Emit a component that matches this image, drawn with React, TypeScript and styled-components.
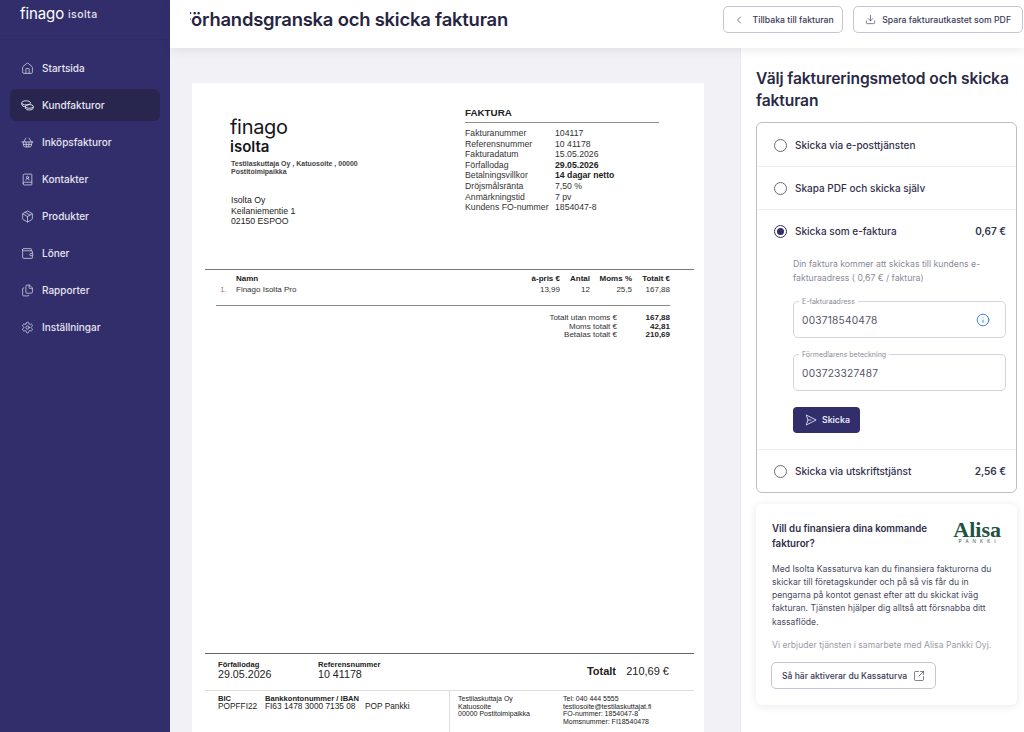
import React from 'react';
import styled, { createGlobalStyle } from 'styled-components';
import {
  Home,
  ShoppingBasket,
  BookUser,
  Package,
  Wallet,
  Files,
  Settings,
  ChevronLeft,
  Download,
  Info,
  SquareArrowOutUpRight,
} from 'lucide-react';

const GlobalStyle = createGlobalStyle`
  html, body {
    margin: 0;
    padding: 0;
    height: 732px;
    overflow: hidden;
    background: #fff;
    font-family: Inter, "Noto Sans", sans-serif;
    color: #2b2a45;
  }
  * { box-sizing: border-box; }
`;

const Shell = styled.div`
  display: flex;
  width: 1024px;
  height: 732px;
  overflow: hidden;
`;

const Sidebar = styled.aside`
  flex: 0 0 170px;
  background: #322e6b;
  color: #e4e3f0;
`;

const Brand = styled.div`
  height: 40px;
  padding: 0 0 12px 20px;
  display: flex;
  align-items: center;
  gap: 4px;
  border-bottom: 1px solid #2f2b64;
`;

const BrandMain = styled.span`
  font-size: 15px;
  font-weight: 400;
  letter-spacing: -0.1px;
  color: #fff;
`;

const BrandSub = styled.span`
  font-size: 10.5px;
  font-weight: 500;
  letter-spacing: 0.4px;
  padding-top: 2px;
  color: #e4e3f0;
`;

const Nav = styled.nav`
  display: flex;
  flex-direction: column;
  gap: 5px;
  padding: 12px 10px 0;
`;

const NavItem = styled.a<{ $active?: boolean }>`
  display: flex;
  align-items: center;
  gap: 8px;
  height: 32px;
  padding-left: 11px;
  border-radius: 6px;
  font-size: 10px;
  font-weight: 500;
  background: ${(p) => (p.$active ? '#28264f' : 'transparent')};
  color: #e6e5f2;
`;

const Main = styled.div`
  flex: 1;
  min-width: 0;
  display: flex;
  flex-direction: column;
`;

const Header = styled.header`
  flex: 0 0 48px;
  display: flex;
  align-items: flex-start;
  justify-content: space-between;
  padding: 6px 1px 0 20px;
  background: #fff;
  box-shadow: 0 2px 10px rgba(40, 40, 90, 0.1);
  z-index: 1;
`;

const TitleClip = styled.div`
  overflow: hidden;
  width: 340px;
  padding-top: 2px;
`;

const Title = styled.h1`
  margin: 0 0 0 -9px;
  font-size: 18.4px;
  line-height: 22px;
  font-weight: 600;
  letter-spacing: -0.2px;
  white-space: nowrap;
  color: #26253f;
`;

const HeaderActions = styled.div`
  display: flex;
  gap: 10px;
`;

const OutlineButton = styled.button`
  display: inline-flex;
  align-items: center;
  gap: 6px;
  height: 27px;
  padding: 0 11px;
  background: #fff;
  border: 1px solid #c6c5d8;
  border-radius: 5px;
  font-family: inherit;
  font-size: 8.7px;
  font-weight: 500;
  color: #3a3957;
  white-space: nowrap;
`;

const BackButton = styled(OutlineButton)`
  gap: 8px;
  padding: 0 8.5px;
`;

const Content = styled.div`
  flex: 1;
  min-height: 0;
  display: flex;
`;

const Preview = styled.section`
  flex: 0 0 570px;
  padding: 35px 0 0 22px;
  background: #f2f2f6;
  overflow: hidden;
`;

const Paper = styled.div`
  width: 512px;
  height: 658px;
  display: flex;
  flex-direction: column;
  background: #fff;
  font-family: "Liberation Sans", Arial, sans-serif;
  color: #222;
`;

const PaperTop = styled.div`
  flex: 0 0 186px;
  display: grid;
  grid-template-columns: 235px 194px;
  padding-left: 38px;
`;

const Sender = styled.div`
  padding-top: 32px;
`;

const InvoiceLogo = styled.div`
  font-family: Inter, sans-serif;
  color: #15151a;
  font-size: 20px;
  line-height: 24px;
  font-weight: 400;
  letter-spacing: -0.3px;
`;

const InvoiceLogoSub = styled.div`
  font-family: Inter, sans-serif;
  color: #15151a;
  font-size: 15px;
  line-height: 16px;
  font-weight: 600;
`;

const SenderLine = styled.div`
  width: 150px;
  margin: 5px 0 0 1px;
  font-size: 7px;
  line-height: 8px;
  font-weight: 700;
  color: #444;
`;

const Address = styled.div`
  margin: 19px 0 0 1px;
  font-size: 8.7px;
  line-height: 10.6px;
  color: #222;
`;

const Facts = styled.div`
  padding-top: 24px;
`;

const FactsTitle = styled.div`
  font-size: 9.8px;
  line-height: 11px;
  font-weight: 700;
  padding-bottom: 4px;
  border-bottom: 1px solid #8c8c8c;
  margin-bottom: 5px;
`;

const FactsGrid = styled.div`
  display: grid;
  grid-template-columns: 90px 1fr;
  font-size: 8.7px;
  line-height: 10.6px;
  color: #333;
`;

const Strong = styled.span`
  font-weight: 700;
  color: #222;
`;

const TableSection = styled.div`
  margin: 0 10px 0 13px;
  border-top: 1px solid #777;
  padding-top: 4px;
`;

const Row = styled.div`
  display: grid;
  grid-template-columns: 31px 1fr 50px 30px 42px 38px;
  padding-right: 24px;
  font-size: 8px;
  line-height: 10.5px;
  color: #333;
`;

const HeadRow = styled(Row)`
  font-weight: 700;
  color: #222;
`;

const Num = styled.span`
  text-align: right;
  padding-right: 10px;
  font-size: 6.5px;
  color: #8a6060;
`;

const Right = styled.span`
  text-align: right;
  white-space: nowrap;
`;

const Rule = styled.div`
  margin: 10px 24px 8px 11px;
  border-top: 1px solid #888;
`;

const Totals = styled.div`
  display: grid;
  grid-template-columns: 1fr 53px;
  padding-right: 24px;
  font-size: 8px;
  line-height: 8.7px;
  text-align: right;
  color: #333;
`;

const Spacer = styled.div`
  flex: 1;
`;

const PaperFooter = styled.div`
  margin: 0 10px 0 13px;
  border-top: 1px solid #666;
`;

const DueRow = styled.div`
  height: 37px;
  display: grid;
  grid-template-columns: 100px 1fr auto 53px;
  align-items: center;
  padding: 0 25px 3px 13px;
  border-bottom: 1px solid #ddd;
`;

const SmallLabel = styled.div`
  font-size: 7.6px;
  line-height: 7px;
  font-weight: 700;
`;

const DueValue = styled.div`
  font-size: 10.7px;
  line-height: 12px;
`;

const TotalLabel = styled.div`
  font-size: 11px;
  font-weight: 700;
`;

const TotalValue = styled.div`
  font-size: 11px;
  text-align: right;
`;

const BankRow = styled.div`
  display: grid;
  grid-template-columns: 244px 1fr;
`;

const BankLeft = styled.div`
  display: grid;
  grid-template-columns: 47px 100px 1fr;
  padding: 4px 0 0 13px;
  height: 50px;
`;

const BankValue = styled.div`
  font-size: 8.3px;
  line-height: 8px;
  white-space: nowrap;
`;

const BankPlain = styled(BankValue)`
  padding-top: 7px;
`;

const BankRight = styled.div`
  display: grid;
  grid-template-columns: 105px 1fr;
  padding: 4px 0 0 8px;
  border-left: 1px solid #ddd;
  font-size: 7px;
  line-height: 7.6px;
  font-weight: 400;
  color: #222;
`;

const Panel = styled.aside`
  flex: 1;
  min-width: 0;
  padding: 20px 7px 0 15px;
  background: #fff;
  border-left: 1px solid #ececf1;
`;

const PanelTitle = styled.h2`
  margin: 0 0 10px;
  font-size: 15.6px;
  line-height: 22px;
  font-weight: 600;
  letter-spacing: -0.1px;
  color: #2a2944;
`;

const MethodCard = styled.div`
  border: 1px solid #bdbdcc;
  border-radius: 6px;
`;

const Method = styled.div`
  padding: 0 10px 0 17px;
  border-top: 1px solid #ececf1;
  &:first-child { border-top-color: transparent; }
`;

const MethodHead = styled.div`
  height: 42px;
  display: flex;
  align-items: center;
  gap: 8px;
  font-size: 10px;
  font-weight: 500;
  color: #33324d;
`;

const Radio = styled.span<{ $checked?: boolean }>`
  flex: 0 0 13px;
  height: 13px;
  border-radius: 50%;
  border: 1.3px solid ${(p) => (p.$checked ? '#322e6b' : '#6b6b75')};
  display: flex;
  align-items: center;
  justify-content: center;
  &::after {
    content: '';
    display: ${(p) => (p.$checked ? 'block' : 'none')};
    width: 7px;
    height: 7px;
    border-radius: 50%;
    background: #322e6b;
  }
`;

const Price = styled.span`
  margin-left: auto;
  font-weight: 600;
`;

const MethodBody = styled.div`
  padding: 6px 0 16px 19px;
`;

const Hint = styled.p`
  margin: 0 0 16px;
  font-size: 8.7px;
  line-height: 13.5px;
  color: #8a8a99;
`;

const Field = styled.div`
  position: relative;
  height: 37px;
  margin-bottom: 16px;
  padding: 0 15px 0 8px;
  display: flex;
  align-items: center;
  justify-content: space-between;
  border: 1px solid #d4d4de;
  border-radius: 5px;
  font-size: 10.2px;
  color: #55556a;
  letter-spacing: 0.2px;
`;

const FieldLabel = styled.label`
  position: absolute;
  top: -5px;
  left: 5px;
  padding: 0 3px;
  background: #fff;
  font-size: 7px;
  line-height: 9px;
  letter-spacing: 0;
  color: #8a8a99;
`;

const SendButton = styled.button`
  display: inline-flex;
  align-items: center;
  gap: 5px;
  height: 26px;
  width: 67px;
  padding: 0 0 0 12px;
  border: none;
  border-radius: 4px;
  background: #322e6b;
  color: #e8e7f4;
  font-family: inherit;
  font-size: 8.7px;
  font-weight: 600;
`;

const PromoCard = styled.div`
  margin-top: 11px;
  height: 201px;
  padding: 17px 16px 0;
  border-radius: 6px;
  background: #fff;
  box-shadow: 0 1px 8px rgba(40, 40, 90, 0.1);
`;

const PromoHead = styled.div`
  display: flex;
  justify-content: space-between;
  margin-bottom: 11.5px;
`;

const PromoTitle = styled.div`
  width: 170px;
  font-size: 9.7px;
  line-height: 15px;
  font-weight: 600;
  color: #2f2e4a;
`;

const AlisaLogo = styled.div`
  text-align: center;
  color: #1e5242;
  font-family: "Liberation Serif", serif;
`;

const AlisaName = styled.div`
  font-size: 22px;
  line-height: 18px;
  font-weight: 700;
`;

const AlisaSub = styled.div`
  font-family: "Liberation Sans", sans-serif;
  font-size: 4.6px;
  line-height: 6px;
  letter-spacing: 4.1px;
  margin-right: -4px;
`;

const PromoText = styled.p`
  margin: 0 0 10px;
  font-size: 8.6px;
  line-height: 13.3px;
  color: #4a4a5e;
`;

const PromoNote = styled(PromoText)`
  color: #9a9aa8;
  margin-bottom: 10px;
`;

const PromoButton = styled(OutlineButton)`
  gap: 6px;
  padding: 0 10px;
  margin-left: -1px;
  font-size: 8.55px;
`;

// stacked coins, no package icon has this shape
const CoinsIcon = () => (
  <svg width="13" height="13" viewBox="0 0 14 14" fill="none" stroke="currentColor" strokeWidth="1">
    <ellipse cx="5.5" cy="4.2" rx="4.6" ry="2.2" />
    <path d="M.9 4.2v2c0 1.2 2 2.2 4.6 2.2" />
    <ellipse cx="9" cy="8" rx="4.2" ry="2" />
    <path d="M4.8 8v1.8c0 1.1 1.9 2 4.2 2s4.2-.9 4.2-2V8" />
  </svg>
);

const SendIcon = () => (
  <svg width="12" height="12" viewBox="0 0 14 14" fill="none" stroke="currentColor" strokeWidth="1" strokeLinejoin="round">
    <path d="M1.5 1.2 13 7 1.5 12.8 3.4 7z" />
    <path d="M3.4 7H7.5" />
  </svg>
);

const navItems = [
  { label: 'Startsida', icon: <Home size={13} strokeWidth={1.3} /> },
  { label: 'Kundfakturor', icon: <CoinsIcon />, active: true },
  { label: 'Inköpsfakturor', icon: <ShoppingBasket size={13} strokeWidth={1.3} /> },
  { label: 'Kontakter', icon: <BookUser size={13} strokeWidth={1.3} /> },
  { label: 'Produkter', icon: <Package size={13} strokeWidth={1.3} /> },
  { label: 'Löner', icon: <Wallet size={13} strokeWidth={1.3} /> },
  { label: 'Rapporter', icon: <Files size={13} strokeWidth={1.3} /> },
  { label: 'Inställningar', icon: <Settings size={13} strokeWidth={1.3} /> },
];

const facts: [string, React.ReactNode][] = [
  ['Fakturanummer', '104117'],
  ['Referensnummer', '10 41178'],
  ['Fakturadatum', '15.05.2026'],
  ['Förfallodag', <Strong>29.05.2026</Strong>],
  ['Betalningsvillkor', <Strong>14 dagar netto</Strong>],
  ['Dröjsmålsränta', '7,50 %'],
  ['Anmärkningstid', '7 pv'],
  ['Kundens FO-nummer', '1854047-8'],
];

const Invoice = () => (
  <Paper>
    <PaperTop>
      <Sender>
        <InvoiceLogo>finago</InvoiceLogo>
        <InvoiceLogoSub>isolta</InvoiceLogoSub>
        <SenderLine>Testilaskuttaja Oy , Katuosoite , 00000 Postitoimipaikka</SenderLine>
        <Address>
          Isolta Oy
          <br />
          Keilaniementie 1
          <br />
          02150 ESPOO
        </Address>
      </Sender>
      <Facts>
        <FactsTitle>FAKTURA</FactsTitle>
        <FactsGrid>
          {facts.map(([label, value]) => (
            <React.Fragment key={label}>
              <span>{label}</span>
              <span>{value}</span>
            </React.Fragment>
          ))}
        </FactsGrid>
      </Facts>
    </PaperTop>
    <TableSection>
      <HeadRow>
        <span />
        <span>Namn</span>
        <Right>à-pris €</Right>
        <Right>Antal</Right>
        <Right>Moms %</Right>
        <Right>Totalt €</Right>
      </HeadRow>
      <Row>
        <Num>1.</Num>
        <span>Finago Isolta Pro</span>
        <Right>13,99</Right>
        <Right>12</Right>
        <Right>25,5</Right>
        <Right>167,88</Right>
      </Row>
      <Rule />
      <Totals>
        <span>Totalt utan moms €</span>
        <Strong>167,88</Strong>
        <span>Moms totalt €</span>
        <Strong>42,81</Strong>
        <span>Betalas totalt €</span>
        <Strong>210,69</Strong>
      </Totals>
    </TableSection>
    <Spacer />
    <PaperFooter>
      <DueRow>
        <div>
          <SmallLabel>Förfallodag</SmallLabel>
          <DueValue>29.05.2026</DueValue>
        </div>
        <div>
          <SmallLabel>Referensnummer</SmallLabel>
          <DueValue>10 41178</DueValue>
        </div>
        <TotalLabel>Totalt</TotalLabel>
        <TotalValue>210,69 €</TotalValue>
      </DueRow>
      <BankRow>
        <BankLeft>
          <div>
            <SmallLabel>BIC</SmallLabel>
            <BankValue>POPFFI22</BankValue>
          </div>
          <div>
            <SmallLabel>Bankkontonummer / IBAN</SmallLabel>
            <BankValue>FI63 1478 3000 7135 08</BankValue>
          </div>
          <BankPlain>POP Pankki</BankPlain>
        </BankLeft>
        <BankRight>
          <div>
            Testilaskuttaja Oy
            <br />
            Katuosoite
            <br />
            00000 Postitoimipaikka
          </div>
          <div>
            Tel: 040 444 5555
            <br />
            testiosoite@testilaskuttajat.fi
            <br />
            FO-nummer: 1854047-8
            <br />
            Momsnummer: FI18540478
          </div>
        </BankRight>
      </BankRow>
    </PaperFooter>
  </Paper>
);

const App = () => (
  <Shell>
    <GlobalStyle />
    <Sidebar>
      <Brand>
        <BrandMain>finago</BrandMain>
        <BrandSub>isolta</BrandSub>
      </Brand>
      <Nav>
        {navItems.map(({ label, icon, active }) => (
          <NavItem key={label} $active={active}>
            {icon}
            {label}
          </NavItem>
        ))}
      </Nav>
    </Sidebar>
    <Main>
      <Header>
        <TitleClip>
          <Title>Förhandsgranska och skicka fakturan</Title>
        </TitleClip>
        <HeaderActions>
          <BackButton>
            <ChevronLeft size={12} strokeWidth={1.4} />
            Tillbaka till fakturan
          </BackButton>
          <OutlineButton>
            <Download size={11} strokeWidth={1.4} />
            Spara fakturautkastet som PDF
          </OutlineButton>
        </HeaderActions>
      </Header>
      <Content>
        <Preview>
          <Invoice />
        </Preview>
        <Panel>
          <PanelTitle>Välj faktureringsmetod och skicka fakturan</PanelTitle>
          <MethodCard>
            <Method>
              <MethodHead>
                <Radio />
                Skicka via e-posttjänsten
              </MethodHead>
            </Method>
            <Method>
              <MethodHead>
                <Radio />
                Skapa PDF och skicka själv
              </MethodHead>
            </Method>
            <Method>
              <MethodHead>
                <Radio $checked />
                Skicka som e-faktura
                <Price>0,67 €</Price>
              </MethodHead>
              <MethodBody>
                <Hint>Din faktura kommer att skickas till kundens e-fakturaadress ( 0,67 € / faktura)</Hint>
                <Field>
                  <FieldLabel>E-fakturaadress</FieldLabel>
                  003718540478
                  <Info size={14} strokeWidth={1.7} color="#3f82d6" />
                </Field>
                <Field>
                  <FieldLabel>Förmedlarens beteckning</FieldLabel>
                  003723327487
                </Field>
                <SendButton>
                  <SendIcon />
                  Skicka
                </SendButton>
              </MethodBody>
            </Method>
            <Method>
              <MethodHead>
                <Radio />
                Skicka via utskriftstjänst
                <Price>2,56 €</Price>
              </MethodHead>
            </Method>
          </MethodCard>
          <PromoCard>
            <PromoHead>
              <PromoTitle>Vill du finansiera dina kommande fakturor?</PromoTitle>
              <AlisaLogo>
                <AlisaName>Alisa</AlisaName>
                <AlisaSub>PANKKI</AlisaSub>
              </AlisaLogo>
            </PromoHead>
            <PromoText>
              Med Isolta Kassaturva kan du finansiera fakturorna du skickar till företagskunder och på så vis får du in
              pengarna på kontot genast efter att du skickat iväg fakturan. Tjänsten hjälper dig alltså att försnabba
              ditt kassaflöde.
            </PromoText>
            <PromoNote>Vi erbjuder tjänsten i samarbete med Alisa Pankki Oyj.</PromoNote>
            <PromoButton>
              Så här aktiverar du Kassaturva
              <SquareArrowOutUpRight size={12} strokeWidth={1.3} />
            </PromoButton>
          </PromoCard>
        </Panel>
      </Content>
    </Main>
  </Shell>
);

export default App;
